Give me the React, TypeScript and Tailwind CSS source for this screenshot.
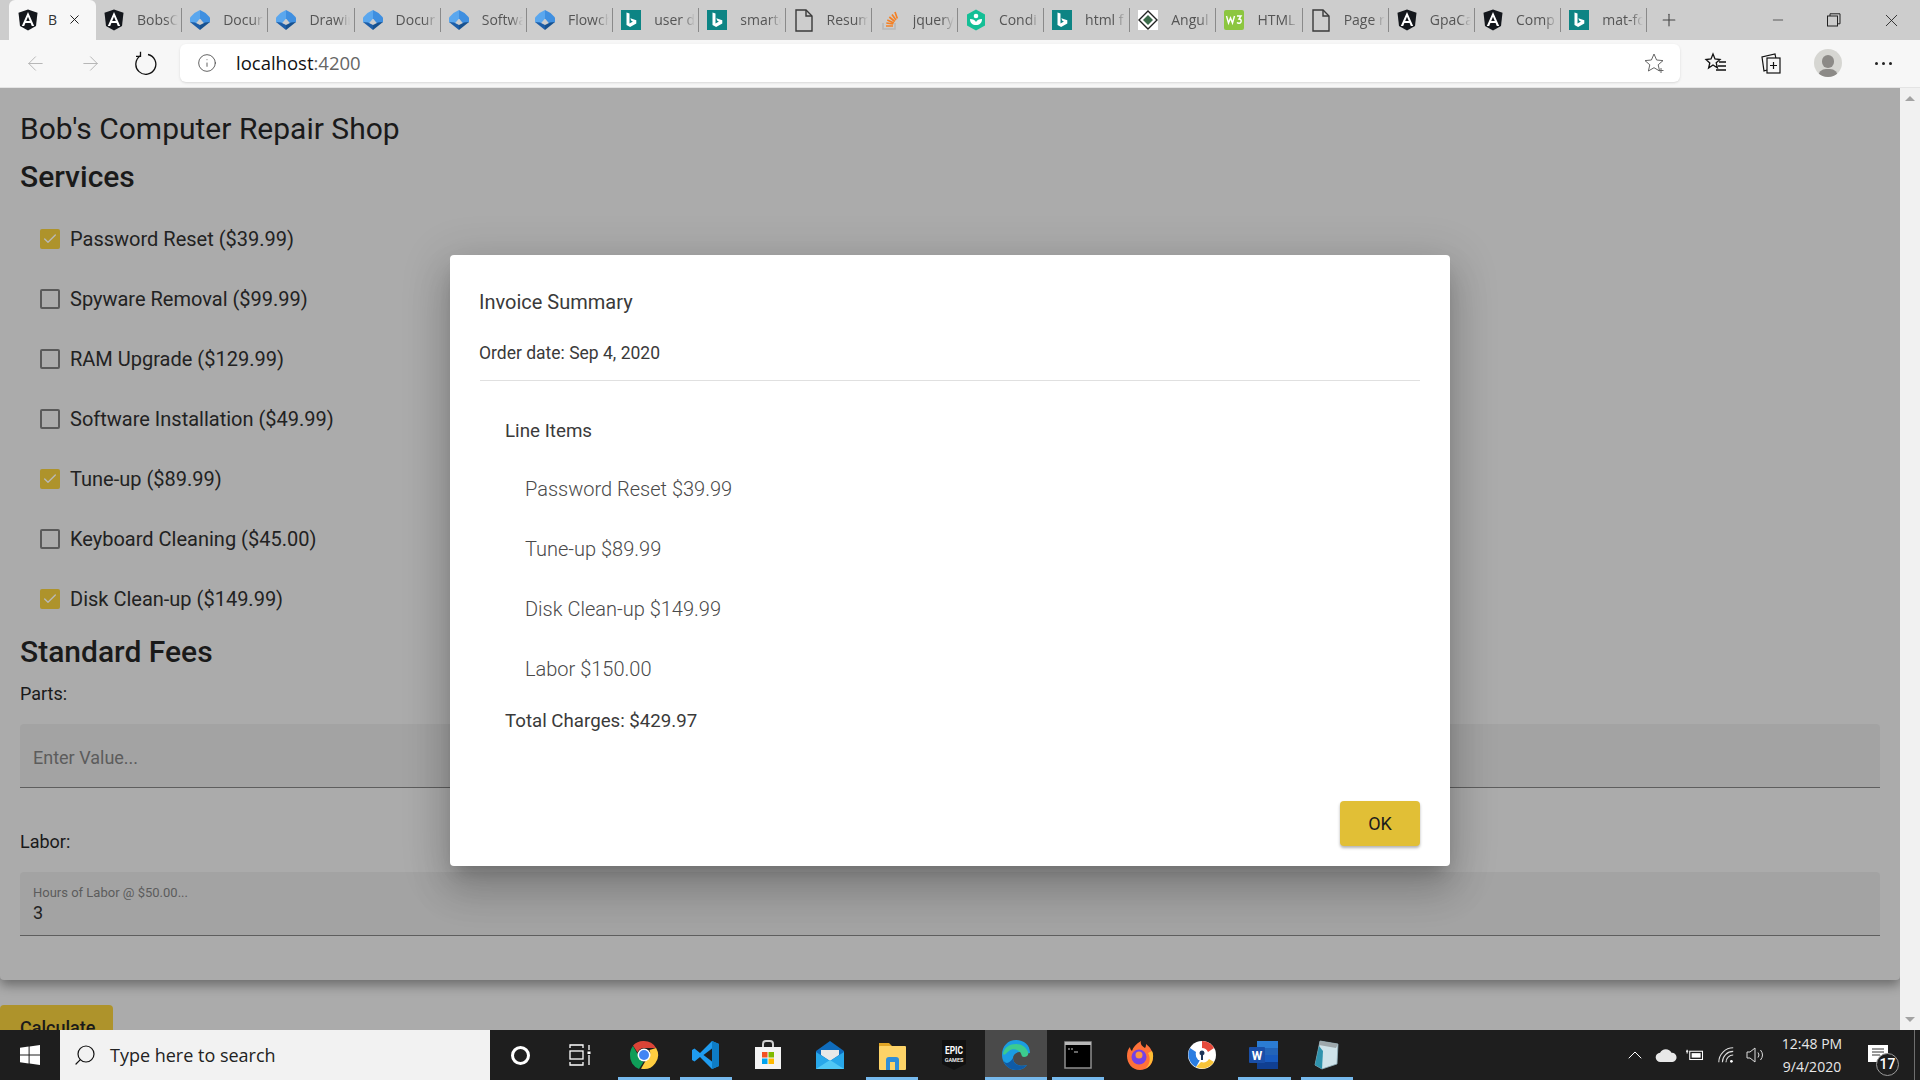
import React from "react";
import { ArrowLeft, ArrowRight, Info, X, Plus, Minus, Check, Search, ChevronUp } from "lucide-react";

const tabIco = "w-6 h-6 shrink-0 -mx-[2px]";
const Angular = () => (
  <svg viewBox="0 0 24 24" className={tabIco}>
    <path d="M12 1.500 2.500 4.800l1.500 13.200L12 22.500l8-4.500 1.500-13.200z" fill="#14171c" />
    <path d="M12 4 5.800 18h2.400l1.200-3.100h5.200l1.200 3.100h2.400zm-1.800 9 1.800-4.300 1.800 4.300z" fill="#fff" />
  </svg>
);
const Diamond = () => (
  <svg viewBox="0 0 24 24" className={tabIco}>
    <path d="M12 2 6.500 5 2 9.500V14l5 2.500 5-6z" fill="#5aa7ee" />
    <path d="M12 2l5.500 3L22 9.500V14l-5 2.500-5-6z" fill="#3f8fe0" />
    <path d="M2 14l10 8v-5l-5-2.500z" fill="#1d5ea8" />
    <path d="M22 14l-10 8v-5l5-2.500z" fill="#17518f" />
  </svg>
);
const Bing = () => (
  <svg viewBox="0 0 24 24" className={tabIco}>
    <rect x="2" y="2" width="20" height="20" fill="#0d8484" />
    <path d="M7.500 4.500 10.500 5.600v10l3.400-2-1.600-.8-1-2.600 6 2.100v3.100l-6.200 3.600-3.600-2z" fill="#fff" />
  </svg>
);
const Page = () => (
  <svg viewBox="0 0 24 24" className={tabIco} fill="none" stroke="#3a3a3a" strokeWidth="1.400">
    <path d="M4 2h10l6 6v15H4z" />
    <path d="M14 2v6h6" />
  </svg>
);
const SO = () => (
  <svg viewBox="0 0 24 24" className={tabIco}>
    <path d="M5 15v6h12v-6" fill="none" stroke="#b8b8b8" strokeWidth="1.600" />
    <path d="M8 18h7M8.300 15l7 1M9.300 12l6.500 3M11.300 9l5.500 4.500M14 6.500l4 5.500M17 4l2.300 6.500" stroke="#f48024" strokeWidth="1.700" fill="none" />
  </svg>
);
const Khan = () => (
  <svg viewBox="0 0 24 24" className={tabIco}>
    <path d="M12 1.500 21 6.500v11L12 22.500 3 17.500v-11z" fill="#14bf96" />
    <circle cx="12" cy="8" r="2.300" fill="#fff" />
    <path d="M6 11c0 4 2.500 6 6 6s6-2 6-6c-3 0-5 1-6 3-1-2-3-3-6-3z" fill="#fff" />
  </svg>
);
const Ang2 = () => (
  <svg viewBox="0 0 24 24" className={tabIco}>
    <rect x="2" y="2" width="20" height="20" fill="#fff" />
    <path d="M12 3 21 12 12 21 3 12z" fill="#fff" stroke="#222" strokeWidth="1.400" />
    <path d="M12 7l5 5-5 5-5-5z" fill="#3c6b4a" />
  </svg>
);
const W3 = () => (
  <svg viewBox="0 0 24 24" className={tabIco}>
    <rect x="2" y="2" width="20" height="20" rx="2" fill="#8cc63f" />
    <path d="M4.500 8l2 7 2-5 2 5 2-7M15 8h4l-2 3c2 0 2.500 1.500 2 3-.5 1.500-3 1.500-4 .5" fill="none" stroke="#fff" strokeWidth="1.400" />
  </svg>
);

const tabs: [React.FC, string][] = [
  [Angular, "BobsC"], [Diamond, "Docur"], [Diamond, "Drawir"], [Diamond, "Docur"], [Diamond, "Softwa"], [Diamond, "Flowch"],
  [Bing, "user d"], [Bing, "smartc"], [Page, "Resum"], [SO, "jquery"], [Khan, "Condi"], [Bing, "html f"], [Ang2, "Angul"],
  [W3, "HTML"], [Page, "Page r"], [Angular, "GpaCa"], [Angular, "Comp"], [Bing, "mat-fo"],
];

const services: [string, boolean][] = [
  ["Password Reset ($39.99)", true], ["Spyware Removal ($99.99)", false], ["RAM Upgrade ($129.99)", false],
  ["Software Installation ($49.99)", false], ["Tune-up ($89.99)", true], ["Keyboard Cleaning ($45.00)", false], ["Disk Clean-up ($149.99)", true],
];

const lineItems = ["Password Reset $39.99", "Tune-up $89.99", "Disk Clean-up $149.99", "Labor $150.00"];

const ico = "w-8 h-8";
const TaskIcons: { el: React.ReactNode; bar?: "single" | "stack" | "active" }[] = [
  { bar: "stack", el: (
    <svg viewBox="0 0 32 32" className={ico}>
      <path d="M16 2a14 14 0 0 1 12.100 7H16a7 7 0 0 0-6.500 4.500L5 6.500A14 14 0 0 1 16 2z" fill="#db4437" />
      <path d="M2 16a14 14 0 0 1 3-9l6 10.500a7 7 0 0 0 4.500 5.400L11 30A14 14 0 0 1 2 16z" fill="#0f9d58" />
      <path d="M28.100 9A14 14 0 0 1 13 29.700l5.500-9.500A7 7 0 0 0 21.500 11z" fill="#ffcd40" />
      <circle cx="16" cy="16" r="6.500" fill="#fff" /><circle cx="16" cy="16" r="5" fill="#4285f4" />
    </svg>) },
  { bar: "stack", el: (
    <svg viewBox="0 0 32 32" className={ico}>
      <path d="M22 2 10 14 4.500 9.500 2 11v10l2.500 1.500L10 18l12 12 7-3V5z" fill="#1f9cf0" />
      <path d="M22 9.500 13.500 16l8.500 6.500z" fill="#1e1e1e" />
      <path d="M22 2l7 3v22l-7 3z" fill="#0e7cc5" />
    </svg>) },
  { el: (
    <svg viewBox="0 0 32 32" className={ico}>
      <path d="M11 9V5a3 3 0 0 1 3-3h4a3 3 0 0 1 3 3v4" fill="none" stroke="#d0d0d0" strokeWidth="2" />
      <rect x="3" y="8" width="26" height="22" fill="#f4f4f4" />
      <rect x="10" y="13" width="5.500" height="5.500" fill="#f25022" /><rect x="16.500" y="13" width="5.500" height="5.500" fill="#7fba00" />
      <rect x="10" y="19.500" width="5.500" height="5.500" fill="#00a4ef" /><rect x="16.500" y="19.500" width="5.500" height="5.500" fill="#ffb900" />
    </svg>) },
  { el: (
    <svg viewBox="0 0 32 32" className={ico}>
      <path d="M16 2 30 12v17H2V12z" fill="#0f6cbd" />
      <path d="M7 11h18v5l-9 6-9-6z" fill="#e8e8e8" />
      <path d="M2 13l14 9 14-9v17H2z" fill="#28a8ea" />
      <path d="M2 30l14-9 14 9z" fill="#50c8f5" />
    </svg>) },
  { bar: "stack", el: (
    <svg viewBox="0 0 32 32" className={ico}>
      <path d="M3 4h10l3 3v4H3z" fill="#e0a526" />
      <rect x="3" y="7" width="27" height="24" rx="1" fill="#fdd367" />
      <path d="M10 31V21a3 3 0 0 1 3-3h7a3 3 0 0 1 3 3v10h-4v-8h-5v8z" fill="#2f8ed8" />
    </svg>) },
  { el: (
    <svg viewBox="0 0 32 32" className={ico}>
      <path d="M4 1h24v24l-12 6-12-6z" fill="#111" />
      <text x="16" y="15" textAnchor="middle" fontSize="11" fontWeight="700" fill="#fff" fontFamily="Roboto, sans-serif" textLength="18" lengthAdjust="spacingAndGlyphs">EPIC</text>
      <text x="16" y="23" textAnchor="middle" fontSize="5.500" fontWeight="500" fill="#fff" fontFamily="Roboto, sans-serif">GAMES</text>
    </svg>) },
  { bar: "active", el: (
    <svg viewBox="0 0 32 32" className={ico}>
      <path d="M16 1C8 1 2 7 2 16c0 8 6 15 14 15 5 0 9-2 11-5-6 2-14 0-14-7 0-3 3-6 7-6s6 2 10 1c0-8-6-13-14-13z" fill="#1b9de2" />
      <path d="M3 15C4 8 10 5 16 5c6 0 10 3 12 8 1 3-1 5-4 5-3 0-2-3-4-5-3-3-8-4-11-1-3 2-4 5-6 3z" fill="#3ccb8f" />
      <path d="M13 19c0 7 8 9 14 7-2 3-6 5-11 5-6 0-11-4-13-10 3 5 7 3 10-2z" fill="#0f5ba6" />
    </svg>) },
  { bar: "single", el: (
    <svg viewBox="0 0 32 32" className={ico}>
      <rect x="3" y="3" width="26" height="26" fill="#000" stroke="#8f8f8f" strokeWidth="1.500" />
      <rect x="3" y="3" width="26" height="3" fill="#b8b8b8" />
      <path d="M6 10h2M9 10h2M12 13h4" stroke="#ccc" strokeWidth="1" />
    </svg>) },
  { el: (
    <svg viewBox="0 0 32 32" className={ico}>
      <path d="M16 31C8 31 3 24 3 17c0-4 1-7 3-9 0 2 1 3 2 4 1-4 4-7 9-10-1 3 1 5 4 7 1-1 1-3 1-4 4 3 7 7 7 13 0 8-6 13-13 13z" fill="#ff7139" />
      <path d="M28 12c3 6 0 15-7 18 5-4 6-11 3-16z" fill="#ffbd33" />
      <circle cx="15" cy="18" r="7.500" fill="#7542e5" />
      <circle cx="15" cy="16" r="3.500" fill="#ff9640" />
    </svg>) },
  { el: (
    <svg viewBox="0 0 32 32" className={ico}>
      <circle cx="16" cy="16" r="14" fill="#fff" />
      <path d="M16 2a14 14 0 0 1 12 7l-6 4a7 7 0 0 0-6-4z" fill="#e64b3c" />
      <path d="M4 9A14 14 0 0 0 10 28l4-7a7 7 0 0 1-4-8z" fill="#2a7de1" />
      <path d="M10 28a14 14 0 0 0 18-5l-5-3a7 7 0 0 1-8 3z" fill="#f7c43a" />
      <circle cx="16" cy="16" r="6" fill="#fff" />
      <path d="M16 11.500a2.500 2.500 0 0 1 1 4.800V21h-2v-4.700a2.500 2.500 0 0 1 1-4.800z" fill="#1d3557" />
    </svg>) },
  { bar: "stack", el: (
    <svg viewBox="0 0 32 32" className={ico}>
      <rect x="9" y="2" width="21" height="28" fill="#2b7cd3" />
      <rect x="9" y="9" width="21" height="7" fill="#2364b8" /><rect x="9" y="16" width="21" height="7" fill="#185abd" /><rect x="9" y="23" width="21" height="7" fill="#103f91" />
      <rect x="1" y="8" width="16" height="16" rx="1" fill="#1a4fa8" />
      <text x="9" y="20.500" textAnchor="middle" fontSize="12" fontWeight="700" fill="#fff" fontFamily="Roboto, sans-serif">W</text>
    </svg>) },
  { bar: "single", el: (
    <svg viewBox="0 0 32 32" className={ico}>
      <path d="M9 2 27 5 26 25 11 30 4 26z" fill="#cfe3ea" stroke="#8ba9b5" strokeWidth="0.800" />
      <path d="M9 2 27 5 25 9 8 6z" fill="#9ea8ac" />
      <path d="M4 26 11 30l1-18-4-5z" fill="#2f93ad" />
    </svg>) },
];

export default function App() {
  return (
    <div className="w-[1920px] h-[1080px] flex flex-col overflow-hidden bg-[#ababab] font-['Roboto',sans-serif]">
      {/* Tab strip */}
      <div className="h-10 shrink-0 flex items-end bg-[#cdcdcd] pl-[9px]">
        <div className="w-[87px] h-10 shrink-0 flex items-center bg-[#f7f7f7] rounded-t-md pl-[9px] pb-[1px]">
          <Angular />
          <span className="ml-[10px] w-[9px] overflow-hidden font-['Open_Sans',sans-serif] text-[14px] text-[#333]">Bobs</span>
          <X size={15} strokeWidth={1.500} className="ml-[10px] text-[#111]" />
        </div>
        {tabs.map(([Icon, label], i) => (
          <div key={i} className="w-[86.200px] h-10 shrink-0 flex items-center pl-[8px] pb-[1px]">
            <Icon />
            <span className="ml-[13px] w-[41px] overflow-hidden whitespace-nowrap font-['Open_Sans',sans-serif] text-[14px] text-[#555] [mask-image:linear-gradient(to_right,#000_70%,transparent)]">{label}</span>
            <div className="ml-auto w-px h-6 bg-[#8a8a8a]" />
          </div>
        ))}
        <div className="h-10 w-[44px] flex items-center justify-center"><Plus size={20} strokeWidth={1.300} className="text-[#444]" /></div>
        <div className="ml-auto h-10 flex items-center text-[#222]">
          <div className="w-[56px] flex justify-center"><Minus size={16} strokeWidth={1} /></div>
          <div className="w-[56px] flex justify-center">
            <svg viewBox="0 0 14 14" className="w-[14px] h-[14px]" fill="none" stroke="#222" strokeWidth="1"><rect x="0.500" y="3" width="10" height="10" /><path d="M3 3V0.800h10v10h-2.500" /></svg>
          </div>
          <div className="w-[58px] flex justify-center"><X size={21} strokeWidth={1} /></div>
        </div>
      </div>

      {/* Toolbar */}
      <div className="h-12 shrink-0 flex items-center bg-[#f7f7f7] border-b border-[#e4e4e4] pb-[1px]">
        <div className="w-[70px] flex justify-center"><ArrowLeft size={23} strokeWidth={1} className="text-[#b4b4b4]" /></div>
        <div className="w-[40px] flex justify-center"><ArrowRight size={23} strokeWidth={1} className="text-[#b4b4b4]" /></div>
        <div className="w-[70px] pl-[23px]">
          <svg viewBox="0 0 24 24" className="w-6 h-6" fill="none" stroke="#111" strokeWidth="1.300"><path d="M7.500 4.800A10 10 0 1 0 15 3.500" /><path d="M7.500 0.800v4.500H3" /></svg>
        </div>
        <div className="w-[1500px] h-[38px] flex items-center bg-white rounded-md shadow-sm">
          <Info size={20} strokeWidth={1} className="ml-[17px] text-[#444]" />
          <span className="ml-[19px] font-['Open_Sans',sans-serif] text-[18.500px] text-[#111]">localhost<span className="text-[#666]">:4200</span></span>
          <svg viewBox="0 0 24 24" className="ml-auto mr-[13px] w-6 h-6" fill="none" stroke="#666" strokeWidth="1"><path d="M11 3l2.600 6 6.400.6-4.800 4.200 1.400 6.200-5.600-3.300L5.400 20l1.400-6.200L2 9.600 8.400 9z" /><path d="M18 17v5M15.500 19.500h5" /></svg>
        </div>
        <div className="w-[72px] flex justify-center">
          <svg viewBox="0 0 24 24" className="w-6 h-6" fill="none" stroke="#111" strokeWidth="1.300"><path d="M9 3l2 5 5 .5-3.800 3.300 1.200 5L9 14l-4.400 3 1.200-5L2 8.500 7 8z" /><path d="M15 11h7M14 15h8M12 19h10" /></svg>
        </div>
        <div className="w-[38px] flex justify-center">
          <svg viewBox="0 0 24 24" className="w-6 h-6" fill="none" stroke="#111" strokeWidth="1.200"><rect x="8" y="7" width="13" height="15" /><path d="M8 19 5 20 3 6 16 3l.8 4M14.500 11v7M11 14.500h7" /></svg>
        </div>
        <div className="w-[75px] flex justify-center">
          <div className="w-7 h-7 rounded-full bg-[#d6d6d2] flex flex-col items-center justify-end overflow-hidden">
            <div className="w-3 h-[13px] rounded-full bg-[#8c8a87] mb-[1px]" />
            <div className="w-[20px] h-2 rounded-t-full bg-[#8c8a87]" />
          </div>
        </div>
        <div className="w-[37px] flex justify-center gap-[4px]">
          <span className="w-[3px] h-[3px] rounded-full bg-[#222]" /><span className="w-[3px] h-[3px] rounded-full bg-[#222]" /><span className="w-[3px] h-[3px] rounded-full bg-[#222]" />
        </div>
      </div>

      {/* Page area */}
      <div className="flex-1 flex min-h-0 relative">
        <div className="w-[1900px] overflow-hidden">
          <div className="bg-[#ababab] rounded-b shadow-[0_5px_12px_rgba(0,0,0,0.38)] px-5 pb-[44px] pt-[21px] text-[#1a1a1a]">
            <div className="text-[30px] leading-10">Bob's Computer Repair Shop</div>
            <div className="mt-2 text-[30px] leading-10 font-medium">Services</div>
            <div className="mt-[12px] pl-5">
              {services.map(([label, on]) => (
                <div key={label} className="h-[60px] flex items-center">
                  {on ? (
                    <span className="w-5 h-5 rounded-[2px] bg-[#ae932b] flex items-center justify-center"><Check size={16} strokeWidth={2} className="text-[#b9b9b9]" /></span>
                  ) : (
                    <span className="w-5 h-5 rounded-[2px] border-2 border-[#5a5a5a]" />
                  )}
                  <span className="ml-[10px] text-[20px] text-[#222]">{label}</span>
                </div>
              ))}
            </div>
            <div className="mt-[3px] text-[30px] leading-10 font-medium">Standard Fees</div>
            <div className="mt-[10px] h-6 leading-6 text-[18px]">Parts:</div>
            <div className="mt-[18px] h-16 flex items-center px-[13px] bg-[#a3a3a3] rounded-t border-b border-[#5e5e5e]">
              <span className="text-[18px] text-[#5c5c5c] pt-[4px]">Enter Value...</span>
            </div>
            <div className="mt-[41px] h-6 leading-6 text-[18px] pt-px">Labor:</div>
            <div className="mt-[19px] h-16 flex flex-col px-[13px] pt-[14px] bg-[#a3a3a3] rounded-t border-b border-[#5e5e5e]">
              <span className="text-[13px] leading-[14px] text-[#5c5c5c]">Hours of Labor @ $50.00...</span>
              <span className="text-[18px] leading-5 mt-[3px] text-[#222]">3</span>
            </div>
          </div>
          <div className="mt-[25px] w-[113px] h-[45px] bg-[#ae932b] rounded flex items-center pl-5 text-[18px] font-medium text-[#1a1a1a]">Calculate</div>
        </div>
        <div className="w-5 flex flex-col items-center justify-between py-[8px] bg-[#f1f1f1]">
          <div className="w-0 h-0 border-x-[5px] border-x-transparent border-b-[5px] border-b-[#a3a3a3]" />
          <div className="w-0 h-0 border-x-[5px] border-x-transparent border-t-[5px] border-t-[#a3a3a3]" />
        </div>

        {/* Dialog */}
        <div className="absolute left-[450px] top-[167px] w-[1000px] h-[611px] flex flex-col bg-white rounded px-[30px] pt-8 pb-5 shadow-[0_11px_15px_-7px_rgba(0,0,0,0.2),0_24px_38px_3px_rgba(0,0,0,0.14),0_9px_46px_8px_rgba(0,0,0,0.12)]">
          <div className="text-[20px] leading-[30px] text-[#3a3a3a] -ml-px">Invoice Summary</div>
          <div className="mt-[24px] text-[17.500px] leading-6 text-[#3a3a3a] -ml-px">Order date: Sep 4, 2020</div>
          <div className="mt-[15px] h-px bg-[#e0e0e0]" />
          <div className="mt-[35px] ml-[25px] text-[18.800px] leading-[30px] text-[#3a3a3a]">Line Items</div>
          <div className="mt-[13px] ml-[45px]">
            {lineItems.map((t) => (
              <div key={t} className="h-[60px] flex items-center text-[20px] font-light text-[#4a4a4a]">{t}</div>
            ))}
          </div>
          <div className="mt-[10px] ml-[25px] text-[18.700px] leading-6 text-[#3a3a3a]">Total Charges: $429.97</div>
          <div className="mt-auto flex justify-end">
            <div className="w-20 h-[45px] flex items-center justify-center bg-[#e1bf36] rounded text-[18px] text-[#1c1c1c] shadow-[0_2px_3px_rgba(0,0,0,0.3)]">OK</div>
          </div>
        </div>
      </div>

      {/* Taskbar */}
      <div className="h-[50px] shrink-0 flex items-center bg-[#1e1e1e]">
        <div className="w-[60px] flex justify-center">
          <svg viewBox="0 0 20 20" className="w-5 h-5" fill="#fff"><path d="M0 2.800 8.600 1.600v8H0zM9.600 1.500 20 0v9.600H9.600zM0 10.600h8.600v8L0 17.300zM9.600 10.600H20V20L9.600 18.600z" /></svg>
        </div>
        <div className="w-[430px] h-[50px] flex items-center bg-[#f2f2f2] pl-[13px]">
          <Search size={24} strokeWidth={1.200} className="text-[#111] -scale-x-100" />
          <span className="ml-[13px] font-['Open_Sans',sans-serif] text-[18px] text-[#222]">Type here to search</span>
        </div>
        <div className="w-[60px] flex justify-center"><div className="w-[19px] h-[19px] rounded-full border-[3px] border-white" /></div>
        <div className="w-[62.500px] flex justify-center">
          <svg viewBox="0 0 22 22" className="w-[22px] h-[22px] -ml-[2px]" fill="none" stroke="#fff" strokeWidth="1.300"><path d="M1 4V1h13v3M1 18v3h13v-3" /><rect x="1" y="7" width="13" height="8" /><path d="M20 1v5M20 11v10" /><rect x="18.500" y="7.500" width="3" height="2.500" fill="#fff" stroke="none" /></svg>
        </div>
        {TaskIcons.map((t, i) => (
          <div key={i} className={`w-[62.100px] h-[50px] shrink-0 relative flex items-center justify-center ${t.bar === "active" ? "bg-[#4a4a4a]" : ""}`}>
            {t.el}
            {t.bar && <div className={`absolute bottom-0 h-[3px] bg-[#76b9ed] ${t.bar === "active" ? "left-0 right-0" : "left-[5px] right-[5px]"}`} />}
          </div>
        ))}
        <div className="ml-auto flex items-center h-[50px] text-white">
          <ChevronUp size={24} strokeWidth={1} className="mr-[5px]" />
          <svg viewBox="0 0 24 16" className="w-[22px] h-[15px] ml-[3px]" fill="#e8e8e8"><path d="M6 15a5 5 0 0 1-.5-10A7 7 0 0 1 18 5a5 5 0 0 1 1 10z" /></svg>
          <svg viewBox="0 0 24 16" className="w-[20px] h-[12px] ml-[8px]" fill="none" stroke="#fff" strokeWidth="1.400"><rect x="5" y="3" width="17" height="11" /><rect x="7.500" y="5.500" width="12" height="6" fill="#fff" stroke="none" /><path d="M0 3h3M1.500 1v5" /></svg>
          <svg viewBox="0 0 20 20" className="w-[18px] h-[18px] ml-[12px]" fill="none" stroke="#ddd" strokeWidth="1.200"><path d="M2 18A16 16 0 0 1 18 2M6 18A12 12 0 0 1 18 6M10 18a8 8 0 0 1 8-8" /><circle cx="16" cy="17" r="1.500" fill="#fff" stroke="none" /></svg>
          <svg viewBox="0 0 20 20" className="w-[20px] h-[20px] ml-[10px]" fill="none" stroke="#ddd" strokeWidth="1"><path d="M2 7h3l5-4v14l-5-4H2z" /><path d="M13 7.500a4 4 0 0 1 0 5M15.500 5a8 8 0 0 1 0 10" /></svg>
          <div className="w-[90px] ml-[2px] flex flex-col items-center font-['Open_Sans',sans-serif] text-[14px] leading-[23px] text-[#e8e8e8]">
            <span>12:48 PM</span>
            <span>9/4/2020</span>
          </div>
          <div className="w-[40px] h-[17px] -mt-[3px] ml-px relative flex justify-center">
            <svg viewBox="0 0 20 17" className="w-5 h-[17px]" fill="#fff"><path d="M0 0h20v17H0z" /><path d="M4 4h12M4 7h12M4 10h8" stroke="#333" strokeWidth="1" /></svg>
            <div className="absolute left-[18px] top-[8px] w-[23px] h-[23px] rounded-full bg-[#1e1e1e] border border-[#9a9a9a] flex items-center justify-center text-[14px] font-medium text-white">17</div>
          </div>
          <div className="w-px h-[50px] ml-4 mr-[5px] bg-[#6e6e6e]" />
        </div>
      </div>
    </div>
  );
}
